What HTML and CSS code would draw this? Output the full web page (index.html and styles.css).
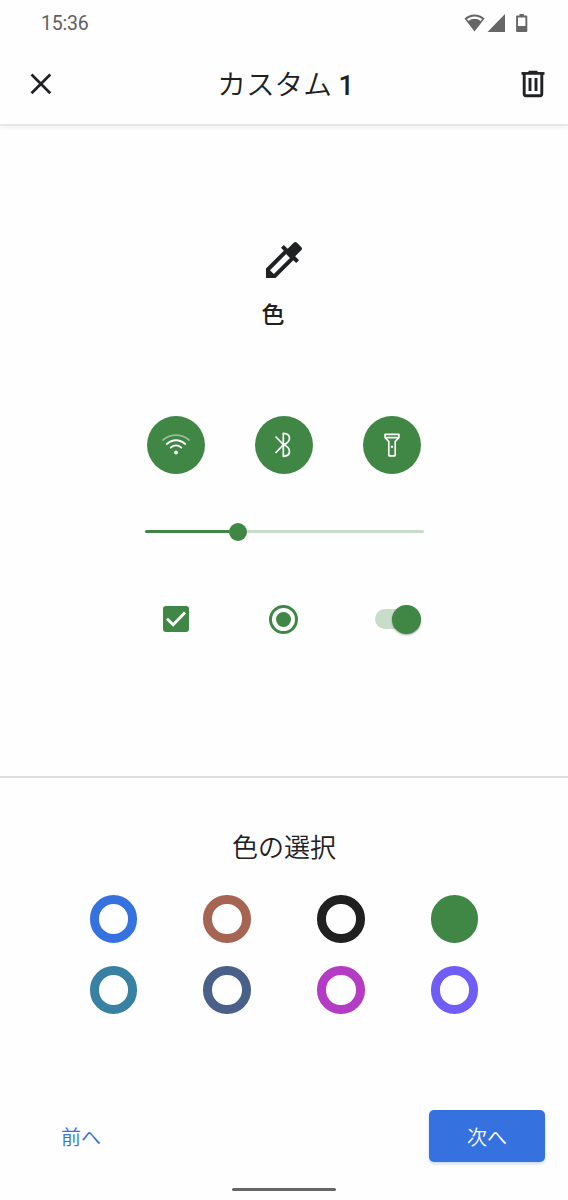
FILE: index.html
```
<!DOCTYPE html>
<html lang="ja">
<head>
  <meta charset="UTF-8">
  <meta name="viewport" content="width=device-width, initial-scale=1.0">
  <title>カスタム 1</title>
  <link rel="stylesheet" href="styles.css">
</head>
<body>
  <div class="status-bar">
      <span class="time">15:36</span>
      <svg class="status-icons" width="64" height="20" viewBox="0 0 64 20" fill="#666">
          <path d="M10.5 18.5 0.5 5.5C6 0.3 15 0.3 20.6 5.5Z"/>
          <path d="M3 6.1C7.5 2.6 13.6 2.6 18.1 6.1L16.7 8C13 5 8.2 5 4.5 8Z" fill="#fff"/>
          <path d="M41 1V19H23.5Z"/>
          <path fill-rule="evenodd" d="M55.5 1h4.4v1.5h2.4a1 1 0 0 1 1 1V18a1 1 0 0 1-1 1h-9.200a1 1 0 0 1-1-1V3.500a1 1 0 0 1 1-1h2.400ZM54 4.500V13h7.400V4.500Z"/>
      </svg>
  </div>

  <header>
      <button class="icon-btn" aria-label="閉じる">
          <svg width="22" height="22" viewBox="0 0 22 22"><path d="M1.500 1.500 20.300 20.300M20.300 1.500 1.500 20.300" stroke="#202124" stroke-width="2.700"/></svg>
      </button>
      <h1>カスタム <span>1</span></h1>
      <button class="icon-btn" aria-label="削除">
          <svg width="24" height="28" viewBox="0 0 24 28" fill="none" stroke="#202124">
              <path d="M0.500 3.400H23.500" stroke-width="2.700"/>
              <path d="M7.500 1.700h9" stroke-width="1.900"/>
              <path d="M3.200 3.500V24.300a1.400 1.400 0 0 0 1.400 1.400H19.400a1.400 1.400 0 0 0 1.400-1.400V3.500" stroke-width="2.900"/>
              <path d="M9 8V21M15 8V21" stroke-width="2.900"/>
          </svg>
      </button>
  </header>

  <section class="preview">
      <svg class="dropper" width="38" height="38" viewBox="2.500 2.500 19 19" fill="#202124">
          <path d="M20.710 5.630l-2.340-2.340a1 1 0 0 0-1.410 0l-3.120 3.120-1.930-1.910-1.410 1.410 1.420 1.420L3 16.250V21h4.750l8.920-8.920 1.420 1.420 1.410-1.410-1.920-1.920 3.120-3.120c.4-.4.4-1.030.010-1.420zM6.920 19L5 17.080l8.060-8.060 1.920 1.920L6.920 19z"/>
      </svg>
      <p class="label">色</p>

      <div class="row tiles">
          <div class="tile">
              <svg width="30" height="26" viewBox="0 0 30 26" fill="none" stroke="#fff" stroke-width="1.800" stroke-linecap="round">
                  <path d="M2 8C9.500 1.500 20.500 1.500 28 8" opacity=".45"/>
                  <path d="M5.800 12C11.400 7 18.600 7 24.200 12M9.700 15.600C13 12.800 17 12.800 20.300 15.600"/>
                  <circle cx="15" cy="20.500" r="1.900" fill="#fff" stroke="none"/>
              </svg>
          </div>
          <div class="tile">
              <svg width="20" height="28" viewBox="0 0 20 28" fill="none" stroke="#fff" stroke-width="1.700" stroke-linejoin="round">
                  <path d="M1.500 5.500 9.500 13.700 1.500 22"/>
                  <path d="M9.300 2.300V25.300C17.500 25 17.500 17 9.600 13.800C17.500 10.600 17.500 2.600 9.300 2.300Z"/>
              </svg>
          </div>
          <div class="tile">
              <svg width="18" height="26" viewBox="0 0 18 26" fill="none" stroke="#fff" stroke-width="1.700" stroke-linejoin="round">
                  <path d="M2.100 2.300H15.900V5.600L12.200 9.500V22.900a1 1 0 0 1-1 1H6.800a1 1 0 0 1-1-1V9.500L2.100 5.600ZM2.400 5.600H15.600"/>
                  <circle cx="9" cy="14.700" r="1.200" fill="#fff" stroke="none"/>
              </svg>
          </div>
      </div>

      <div class="slider">
          <div class="filled"></div>
          <div class="thumb"></div>
          <div class="rest"></div>
      </div>

      <div class="row controls">
          <div class="checkbox">
              <svg width="26" height="26" viewBox="0 0 26 26"><path d="M4 12.700 10.200 18.700 22 6.500" fill="none" stroke="#fff" stroke-width="2.800"/></svg>
          </div>
          <div class="radio"></div>
          <div class="switch"><div class="knob"></div></div>
      </div>
  </section>

  <section class="picker">
      <h2>色の選択</h2>
      <div class="colors">
          <div class="color blue"></div>
          <div class="color brown"></div>
          <div class="color black"></div>
          <div class="color green"></div>
          <div class="color teal"></div>
          <div class="color slate"></div>
          <div class="color magenta"></div>
          <div class="color purple"></div>
      </div>
  </section>

  <footer>
      <button class="prev">前へ</button>
      <button class="next">次へ</button>
  </footer>
  <div class="home-bar"></div>
</body>
</html>
```
FILE: styles.css
```
* {
    box-sizing: border-box;
}
body {
    margin: 0;
    height: 1200px;
    display: flex;
    flex-direction: column;
    align-items: stretch;
    overflow: hidden;
    background: #fefefe;
    color: #202020;
    font-family: "Noto Sans CJK JP", sans-serif;
    font-weight: 350;
}
button {
    border: none;
    background: none;
    padding: 0;
    font-family: inherit;
    font-weight: inherit;
}
svg {
    display: block;
}
.status-bar {
    height: 44px;
    padding: 2px 40px 0 41px;
    display: flex;
    align-items: center;
    justify-content: space-between;
}
.time {
    font: 450 19.5px Roboto, sans-serif;
    letter-spacing: -0.2px;
    color: #606060;
}
header {
    height: 82px;
    padding: 0 23px 0 30px;
    display: flex;
    align-items: center;
    justify-content: space-between;
    border-bottom: 2px solid #e6e6e6;
    box-shadow: 0 2px 4px rgba(0,0,0,0.05);
}
h1 {
    margin: 0 2px 0 0;
    font-size: 28.7px;
    font-weight: 350;
    line-height: 40px;
}
h1 span {
    font-family: Roboto, sans-serif;
    font-size: 27px;
    font-weight: 500;
}
.preview {
    height: 652px;
    border-bottom: 2px solid #dedede;
    display: flex;
    flex-direction: column;
    align-items: center;
}
.dropper {
    margin-top: 115px;
}
.label {
    margin: 17px 22px 0 0;
    font-size: 23px;
    font-weight: 500;
    line-height: 34px;
}
.row {
    width: 325px;
    display: grid;
    grid-template-columns: repeat(3, 1fr);
    justify-items: center;
    align-items: center;
}
.tiles {
    margin-top: 85.5px;
}
.tile {
    width: 58px;
    height: 58px;
    border-radius: 50%;
    background: #408644;
    display: flex;
    align-items: center;
    justify-content: center;
}
.slider {
    width: 279px;
    height: 18px;
    margin-top: 49px;
    display: flex;
    align-items: center;
}
.filled {
    width: 84px;
    height: 3px;
    border-radius: 2px 0 0 2px;
    background: #408644;
}
.thumb {
    width: 18px;
    height: 18px;
    border-radius: 50%;
    background: #408644;
}
.rest {
    flex: 1;
    height: 3px;
    border-radius: 0 2px 2px 0;
    background: #c7ddc9;
}
.controls {
    margin-top: 64px;
}
.checkbox {
    width: 26px;
    height: 26px;
    border-radius: 3px;
    background: #408644;
}
.radio {
    width: 29px;
    height: 29px;
    border: 3px solid #408644;
    border-radius: 50%;
    padding: 4px;
    background: #408644 content-box;
}
.switch {
    width: 46px;
    height: 20px;
    margin-left: 12px;
    border-radius: 10px;
    background: #c7ddc9;
    display: flex;
    align-items: center;
    justify-content: flex-end;
}
.knob {
    width: 29px;
    height: 29px;
    flex: none;
    border-radius: 50%;
    background: #408644;
    box-shadow: 0 1px 2px rgba(0,0,0,0.35);
}
.picker {
    padding-top: 48px;
}
h2 {
    margin: 0;
    font-size: 26px;
    font-weight: 350;
    line-height: 40px;
    text-align: center;
}
.colors {
    margin: 29px auto 0;
    width: 455px;
    display: grid;
    grid-template-columns: repeat(4, 1fr);
    justify-items: center;
    row-gap: 23.5px;
}
.color {
    width: 47.5px;
    height: 47.5px;
    border: 9px solid;
    border-radius: 50%;
}
.blue { border-color: #3671e0; }
.brown { border-color: #a66453; }
.black { border-color: #202020; }
.green { border-color: #408644; background: #408644; }
.teal { border-color: #3981a3; }
.slate { border-color: #4b6088; }
.magenta { border-color: #b43bc3; }
.purple { border-color: #705cf6; }
footer {
    margin-top: 96.500px;
    padding: 0 23px 0 23px;
    display: flex;
    justify-content: space-between;
}
footer button {
    width: 116px;
    height: 52px;
    font-size: 20px;
    border-radius: 5px;
}
.prev {
    color: #3671e0;
}
.next {
    background: #3671e0;
    color: #fff;
    box-shadow: 0 2px 3px rgba(54,113,224,0.25);
}
.home-bar {
    width: 104px;
    height: 3px;
    margin: 26px auto 0;
    border-radius: 2px;
    background: #666;
}
```
